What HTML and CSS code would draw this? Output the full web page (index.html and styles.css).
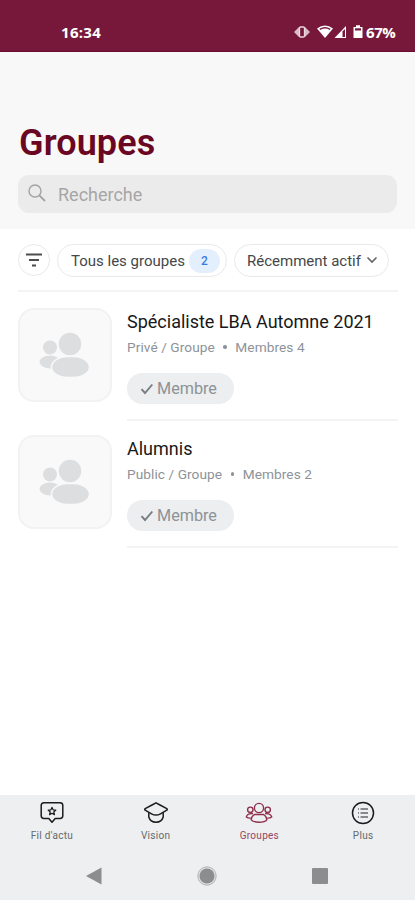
FILE: index.html
```html
<!DOCTYPE html>
<html lang="fr">
<head>
<meta charset="utf-8">
<meta name="viewport" content="width=device-width, initial-scale=1">
<title>Groupes</title>
<link rel="stylesheet" href="styles.css">
</head>
<body>
<svg class="defs" width="0" height="0" aria-hidden="true">
  <symbol id="people" viewBox="0 0 50 46">
    <circle cx="11" cy="15.500" r="7"/>
    <ellipse cx="11" cy="30" rx="10.500" ry="6.500"/>
    <g class="people-front">
      <circle cx="31" cy="12" r="12"/>
      <rect x="12.500" y="24.500" width="38" height="21" rx="16" ry="10.500"/>
    </g>
  </symbol>
  <symbol id="check" viewBox="0 0 14 12">
    <path d="M1.500 6.200 5 10 12.300 1.500" fill="none" stroke="currentColor" stroke-width="1.900"/>
  </symbol>
</svg>
<div class="app">
  <div class="status">
    <span class="time">16:34</span>
    <svg class="status-icons" width="82" height="18" viewBox="0 0 82 18">
      <g fill="#d9bcc6"><path d="M6 4 1 9l5 5zM12 4l5 5-5 5z"/></g>
      <rect x="6.500" y="4" width="5" height="10" rx="1" fill="#77183a" stroke="#ead9df" stroke-width="1.300"/>
      <path d="M24 5.500Q32-.5 40 5.500L32 15z" fill="#fff"/>
      <path d="M26.800 6.300q5.200-3.200 10.400 0" fill="none" stroke="#77183a" stroke-width="1.500"/>
      <path d="M41.500 15 53 3v12z" fill="#fff"/>
      <path d="M49.500 8.500 52 6v8h-2.500z" fill="#77183a"/>
      <path d="M60.500 4H63V2.300h4V4h2.500v11h-9z" fill="#fff"/>
      <path d="M62 5.300h6v2.200h-6z" fill="#77183a"/>
    </svg>
    <span class="battery">67%</span>
  </div>
  <header class="head">
    <h1>Groupes</h1>
    <div class="search">
      <svg width="18" height="18" viewBox="0 0 18 18" fill="none" stroke="#a3a3a3" stroke-width="1.400"><circle cx="7" cy="7" r="6"/><path d="m11.300 11.300 5.700 5.700" stroke-width="1.800"/></svg>
      <span>Recherche</span>
    </div>
  </header>
  <main>
    <div class="filters">
      <div class="round">
        <svg width="16" height="14" viewBox="0 0 16 14" stroke="#4b4d50" stroke-width="1.800"><path d="M0 1.500h16M3 7h10M6 12.500h4"/></svg>
      </div>
      <div class="chip chip-groups"><span>Tous les groupes</span><b>2</b></div>
      <div class="chip chip-sort"><span>Récemment actif</span>
        <svg width="12" height="8" viewBox="0 0 12 8" fill="none" stroke="#66686b" stroke-width="1.700"><path d="m1.500 1.500 4.500 4.500 4.500-4.500"/></svg>
      </div>
    </div>
    <div class="list">
      <article class="group">
        <div class="avatar"><svg width="50" height="46"><use href="#people"/></svg></div>
        <div class="info">
          <h2>Spécialiste LBA Automne 2021</h2>
          <p class="meta"><span>Privé / Groupe</span><i></i><span>Membres 4</span></p>
          <div class="member"><svg width="14" height="12"><use href="#check"/></svg><span>Membre</span></div>
        </div>
      </article>
      <article class="group">
        <div class="avatar"><svg width="50" height="46"><use href="#people"/></svg></div>
        <div class="info">
          <h2>Alumnis</h2>
          <p class="meta"><span>Public / Groupe</span><i></i><span>Membres 2</span></p>
          <div class="member"><svg width="14" height="12"><use href="#check"/></svg><span>Membre</span></div>
        </div>
      </article>
    </div>
  </main>
  <footer>
    <nav class="tabs">
      <div class="tab">
        <svg width="26" height="24" viewBox="0 0 26 24" fill="none" stroke="#1b1c1e" stroke-width="1.500" stroke-linejoin="round"><path d="M5 1.800h16q2.800 0 2.800 2.700v10.300q0 2.700-2.800 2.700h-4.800L13 21.200 9.800 17.500H5q-2.800 0-2.800-2.700V4.500q0-2.700 2.800-2.700z"/><path d="m13 6.400 1.100 2.400 2.700.3-2 1.800.6 2.700-2.400-1.300-2.400 1.300.6-2.700-2-1.800 2.700-.3z" stroke-width="1.300"/></svg>
        <span>Fil d'actu</span>
      </div>
      <div class="tab">
        <svg width="26" height="24" viewBox="0 0 26 24" fill="none" stroke="#1b1c1e" stroke-width="1.500" stroke-linejoin="round"><path d="M13 1.800 9 4 2.200 7.600q-1 .8 0 1.600l6.300 3.600q4.500 2.600 9 0l6.300-3.600q1-.8 0-1.600L17 4z"/><path d="M5.800 11.500v4.500q1.500 5.200 7.200 5.200t7.200-5.200v-4.500"/></svg>
        <span>Vision</span>
      </div>
      <div class="tab active">
        <svg width="28" height="24" viewBox="0 0 28 24" fill="none" stroke="#8e304d" stroke-width="1.400" stroke-linejoin="round"><circle cx="14" cy="7" r="4.600"/><circle cx="5.300" cy="8.800" r="2.700"/><circle cx="22.700" cy="8.800" r="2.700"/><path d="M9.500 13.500h9q3.300 2 3.300 5.300-1.800 2.400-7.800 2.400t-7.800-2.400q0-3.300 3.300-5.300z"/><path d="M8 12.700q-5.800-.5-6.700 3.300 1.700 1.300 4.500 1.100M20 12.700q5.800-.5 6.700 3.300-1.700 1.300-4.500 1.100"/></svg>
        <span>Groupes</span>
      </div>
      <div class="tab">
        <svg width="26" height="24" viewBox="0 0 26 24" fill="none" stroke="#1b1c1e" stroke-width="1.500"><circle cx="13" cy="12" r="10.500"/><path d="M10.500 8h7.500M10.500 12h7.500M10.500 16h7.500M8 8h1M8 12h1M8 16h1" stroke="#66686b" stroke-width="1.300"/></svg>
        <span>Plus</span>
      </div>
    </nav>
    <div class="system">
      <svg width="16" height="18" viewBox="0 0 16 18"><path d="M0 9 15.500.5v17z" fill="#8b8d8e"/></svg>
      <svg width="20" height="20" viewBox="0 0 20 20"><circle cx="10" cy="10" r="9.200" fill="#dcdddf" stroke="#b2b4b5"/><circle cx="10" cy="10" r="7.500" fill="#8b8d8e"/></svg>
      <svg width="16" height="16" viewBox="0 0 16 16"><rect width="16" height="16" rx="1" fill="#8b8d8e"/></svg>
    </div>
  </footer>
</div>
</body>
</html>
```
FILE: styles.css
```css
* { box-sizing: border-box; margin: 0; padding: 0; }
body { background: #fff; font-family: Roboto, sans-serif; }
.defs { display: block; height: 0; }
svg { flex: none; display: block; }
.app { width: 415px; height: 900px; display: flex; flex-direction: column; overflow: hidden; }
main { flex: 1; }
span, h1, h2 { white-space: nowrap; }

.status { height: 52px; background: #77183a; border-bottom: 1px solid #6c0c2f; color: #fff; display: flex; padding: 22px 19px 0 61px; line-height: 20px; font-family: "Open Sans", sans-serif; font-weight: 700; font-size: 15px; }
.time { width: 232px; letter-spacing: .3px; }
.status-icons { margin-top: 1px; }
.battery { margin-left: -9px; letter-spacing: -.4px; }

.head { height: 177px; background: #f8f8f8; padding: 69px 18px 0; }
h1 { color: #6a0722; font-size: 36px; line-height: 44px; height: 54px; font-weight: 600; letter-spacing: .1px; padding-left: 1px; }
.search { height: 38px; border-radius: 11px; background: #ebebeb; display: flex; align-items: center; padding-left: 10px; gap: 12px; color: #a6a6a6; font-size: 18px; padding-top: 1px; }
.search svg { margin-top: -3px; }

.filters { margin: 0 17px 0 18px; height: 63px; padding-top: 15px; border-bottom: 2px solid #f4f4f5; display: flex; gap: 7px; }
.round, .chip { height: 33px; border: 1.5px solid #e8e9ea; display: flex; align-items: center; }
.round { width: 32px; height: 32px; border-radius: 50%; justify-content: center; }
.chip { border-radius: 17px; color: #45474a; font-size: 15px; }
.chip-groups { width: 170px; padding-left: 13px; }
.chip-groups b { width: 31px; height: 24px; border-radius: 12px; background: #e4effd; color: #397ddd; font-size: 12px; font-weight: 500; line-height: 24px; text-align: center; margin-left: 4px; }
.chip-sort { width: 155px; padding-left: 12px; }
.chip-sort svg { margin: -2px 0 0 5px; }

.list { padding: 16px 17px 0 18px; }
.group { height: 127px; display: flex; gap: 15px; }
.avatar { width: 94px; height: 94px; border: 2px solid #f2f2f3; border-radius: 16px; background: #f9f9f9; display: flex; align-items: center; justify-content: center; flex: none; }
.avatar svg { fill: #dcdedf; overflow: visible; margin: -1px 2px 0 0; }
.people-front { stroke: #f9f9f9; stroke-width: 1.5; }
.info { flex: 1; height: 113px; border-bottom: 2px solid #f3f3f4; }
h2 { font-size: 18px; font-weight: 400; line-height: 26px; color: #17181a; padding-top: 1px; height: 26px; }
.meta { display: flex; align-items: center; height: 26px; font-size: 13.7px; color: #8d9399; }
.meta span { letter-spacing: .06px; }
.meta i { width: 3.5px; height: 3.5px; border-radius: 50%; background: #8d9399; margin: 0 8.5px; }
.member { margin-top: 13px; width: 107px; height: 31px; border-radius: 16px; background: #eceef0; color: #8e9297; display: flex; align-items: center; gap: 3px; padding-left: 13px; font-size: 16.2px; }
.member svg { color: #777c80; }

footer { height: 105px; background: #edeff0; }
.tabs { display: grid; grid-template-columns: repeat(4, 1fr); height: 60px; }
.tab { display: flex; flex-direction: column; align-items: center; padding-top: 6px; font-size: 10px; letter-spacing: .28px; line-height: 14px; color: #66696c; gap: 4px; }
.tab.active { color: #96455f; }
.system { height: 41px; padding: 0 87px 0 86px; display: flex; align-items: center; justify-content: space-between; }
```
